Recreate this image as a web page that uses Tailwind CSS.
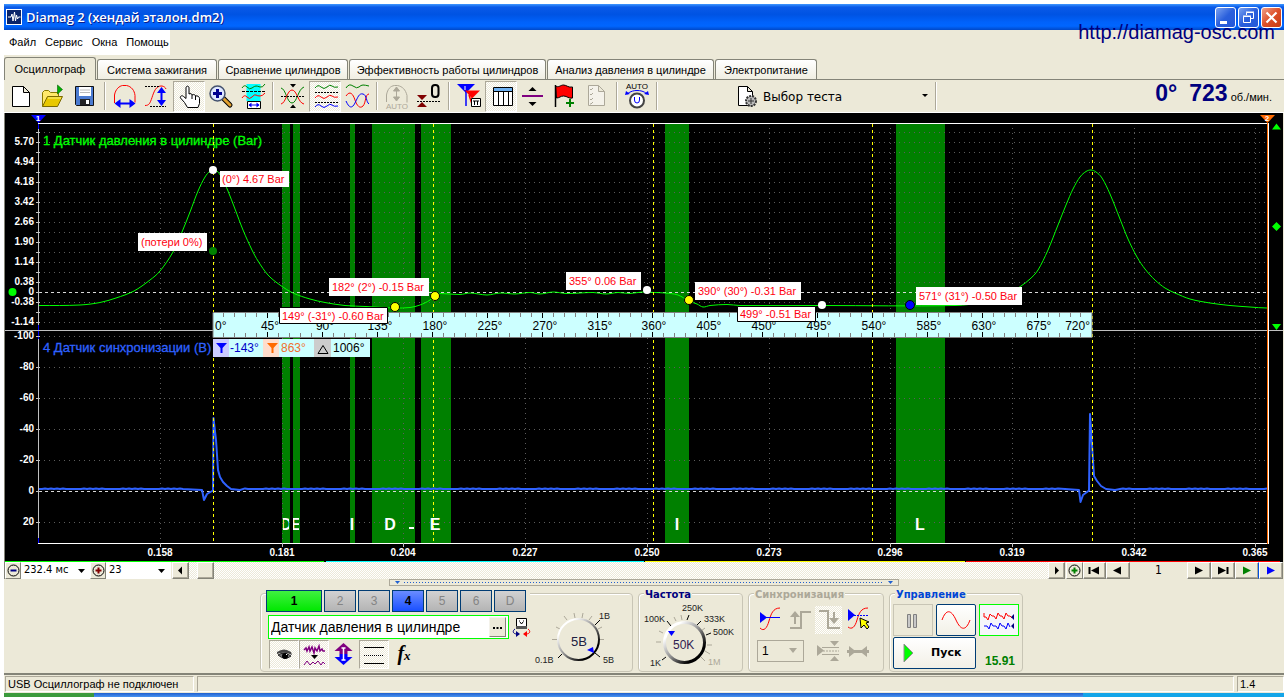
<!DOCTYPE html>
<html lang="ru">
<head>
<meta charset="utf-8">
<title>Diamag 2</title>
<script src="https://cdn.jsdelivr.net/npm/@tailwindcss/browser@4"></script>
</head>
<body class="bg-white pt-1 pl-1 pr-1 font-['Liberation_Sans',sans-serif] text-black">
<div class="flex flex-col bg-[#ece9d8]">

  <!-- Title bar -->
  <header class="flex h-[26px] items-center gap-1 bg-[linear-gradient(#3f97ff_0,#0a5ae8_12%,#0053e3_40%,#0062fb_70%,#0066ff_85%,#0048c8_100%)] pl-[2px] pr-[2px]">
    <svg class="h-4 w-4" viewBox="0 0 16 16"><rect width="16" height="16" fill="#fff"/><rect x="1" y="1" width="14" height="14" fill="#0a246a"/><path d="M2 8h3l1-3 1 7 1.500-9 1 9 1-6 1 4 1-2h2" fill="none" stroke="#fff"/></svg>
    <h1 class="flex-1 whitespace-nowrap font-['Open_Sans',sans-serif] text-[13px] leading-4 font-semibold text-white [text-shadow:1px_1px_#0a1e8c]">Diamag 2 (хендай эталон.dm2)</h1>
    <div class="flex gap-[2px]">
      <button aria-label="Свернуть" class="h-[21px] w-[21px] rounded-[3px] border border-white bg-[linear-gradient(135deg,#7ba2f0,#2a5fdc_50%,#2458d8)]"><svg viewBox="0 0 19 19"><path d="M4 14.500h7" stroke="#fff" stroke-width="3"/></svg></button>
      <button aria-label="Восстановить" class="h-[21px] w-[21px] rounded-[3px] border border-white bg-[linear-gradient(135deg,#7ba2f0,#2a5fdc_50%,#2458d8)]"><svg viewBox="0 0 19 19" fill="none" stroke="#fff"><path d="M7.500 7V4.500h7v6H12M7 4h8"/><path d="M4.500 8.500h7v6h-7zM4 8h8"/></svg></button>
      <button aria-label="Закрыть" class="h-[21px] w-[21px] rounded-[3px] border border-white bg-[linear-gradient(135deg,#f0a08a,#dd4f28_50%,#c83c12)]"><svg viewBox="0 0 19 19"><path d="M4.500 4.500l10 10m0-10l-10 10" stroke="#fff" stroke-width="2.200"/></svg></button>
    </div>
  </header>

  <!-- Menu -->
  <div class="relative flex h-[27px] items-start">
    <nav class="flex h-[25px] w-[166px] items-center gap-[9px] bg-white pl-[5px] text-[11px]">
      <button>Файл</button><button>Сервис</button><button>Окна</button><button>Помощь</button>
    </nav>
    <a href="#site" class="absolute -top-[10px] right-[9px] text-[20px] leading-6 text-[#00007e]">http://diamag-osc.com</a>
  </div>

  <!-- Tabs -->
  <div role="tablist" class="flex h-[23px] items-end gap-px border-b border-[#848478] leading-4 whitespace-nowrap">
    <button role="tab" aria-selected="true" class="-mb-px h-[23px] w-[92px] rounded-t-[3px] border border-b-0 border-[#848478] bg-[#ece9d8] text-[11px]">Осциллограф</button>
    <button role="tab" class="h-5 w-[120px] rounded-t-[3px] border border-b-0 border-[#848478] bg-[linear-gradient(#fff,#f0eee2)] text-[11px]">Система зажигания</button>
    <button role="tab" class="h-5 w-[130px] rounded-t-[3px] border border-b-0 border-[#848478] bg-[linear-gradient(#fff,#f0eee2)] text-[11px]">Сравнение цилиндров</button>
    <button role="tab" class="h-5 w-[197px] rounded-t-[3px] border border-b-0 border-[#848478] bg-[linear-gradient(#fff,#f0eee2)] text-[11px]">Эффективность работы цилиндров</button>
    <button role="tab" class="h-5 w-[167px] rounded-t-[3px] border border-b-0 border-[#848478] bg-[linear-gradient(#fff,#f0eee2)] text-[11px]">Анализ давления в цилиндре</button>
    <button role="tab" class="h-5 w-[102px] rounded-t-[3px] border border-b-0 border-[#848478] bg-[linear-gradient(#fff,#f0eee2)] text-[11px]">Электропитание</button>
  </div>

  <!-- Toolbar -->
  <div role="toolbar" class="flex h-[33px] items-center border-b border-white pl-px">
    <button aria-label="Новый" class="h-[31px] w-8"><svg viewBox="5 81 32 31"><path d="M12.500 86.500h11l6 6v14h-17zM23.500 86.500v6h6" fill="#fff" stroke="#000"/></svg></button>
    <button aria-label="Открыть" class="h-[31px] w-8"><svg viewBox="37 81 32 31"><path d="M42.500 106.500v-14l2-2h4l2 2h8v4" fill="#ffe96b" stroke="#8a7a00"/><path d="M42.500 106.500l5-10h15l-5 10z" fill="#e8c800" stroke="#7a6a00"/><path d="M57.500 85v9l5-4.500z" fill="#00b000" stroke="#006000" stroke-width=".6"/><path d="M48 98h13" stroke="#fff68a"/></svg></button>
    <button aria-label="Сохранить" class="h-[31px] w-8"><svg viewBox="69 81 32 31"><path d="M75.500 86.500h18v19h-17l-1-1z" fill="#4a7ad0" stroke="#111"/><path d="M79 87h12v9H79z" fill="#fff"/><path d="M80 90h10M80 92.500h10" stroke="#bbb"/><path d="M80 99h10v6H80z" fill="#222"/><path d="M86 100h3v4h-3z" fill="#fff"/></svg></button>
    <span class="flex h-7 w-2 justify-center"><i class="w-[2px] border-l border-[#aca899] bg-white"></i></span>
    <button aria-label="Растянуть по времени" class="h-[31px] w-8"><svg viewBox="109 81 32 31"><path d="M114.500 103v-8c1-6 5-9 8-9.500h4c5 1 8 5 8.500 10v7" fill="none" stroke="#f00"/><path d="M117 103.500h16" stroke="#00f" stroke-width="2"/><path d="M114.500 103.500l6-4.500v9zM135.500 103.500l-6-4.500v9z" fill="#00f"/></svg></button>
    <button aria-label="Растянуть по амплитуде" class="h-[31px] w-8"><svg viewBox="141 81 32 31" fill="none"><path d="M145 105.500c4 0 5-2 7-8s4-12 10-11.500c2 .5 3 1 4 3" stroke="#f00"/><path d="M145 86.500h15M150 106.500h16" stroke="#000" stroke-dasharray="2 1"/><path d="M161.500 90v14" stroke="#00f" stroke-width="2"/><path d="M161.500 87l4.500 6h-9zM161.500 106l4.500-6h-9z" fill="#00f"/></svg></button>
    <button aria-label="Рука" class="h-[31px] w-8 border border-[#aca899] border-r-white border-b-white bg-[repeating-conic-gradient(#fff_0_25%,#ece9d8_0_50%)] bg-[length:2px_2px]"><svg viewBox="174 82 30 29"><path d="M187.500 107.500l-3-5-4-4.500c-1-2 2-3 3-1.500l2.500 2V88c0-2.500 3-2.500 3 0v6c1.500-1 3 0 3 1 2-1 3.500 0 3.500 1 2-.5 4 .5 4 2.500v5l-1.500 4z" fill="#fff" stroke="#000" stroke-linejoin="round"/><path d="M192 95v4M195.500 96v4" stroke="#000"/></svg></button>
    <button aria-label="Увеличить" class="h-[31px] w-8"><svg viewBox="205 81 32 31"><path d="M224 99l6 6" stroke="#000" stroke-width="5" stroke-linecap="round"/><path d="M224 99l6 6" stroke="#e0a030" stroke-width="3" stroke-linecap="round"/><circle cx="217.500" cy="93.500" r="7.500" fill="#dfe8ff" stroke="#44526e" stroke-width="1.500"/><path d="M213 93.500h9M217.500 89v9" stroke="#000090" stroke-width="3"/></svg></button>
    <button aria-label="Участок" class="h-[31px] w-8"><svg viewBox="237 81 32 31" fill="none"><path d="M246.500 84h14v17h-14z" fill="#0ff"/><path d="M242 88q2.500-4 5-1t5 1 4-2 4 1 5-3" stroke="#008000"/><path d="M242 91.500h23" stroke="#000" stroke-dasharray="3 1"/><path d="M242 98q2.500-4 5-1t5 0 4-2 4 1 5-3" stroke="#f00"/><path d="M247.500 101.500h13v7h-13z" fill="#fff" stroke="#000"/><path d="M249 105h10" stroke="#00f"/><path d="M248.500 105l3-2.500v5zM259.500 105l-3-2.500v5z" fill="#00f"/></svg></button>
    <span class="flex h-7 w-2 justify-center"><i class="w-[2px] border-l border-[#aca899] bg-white"></i></span>
    <button aria-label="Наложить" class="h-[31px] w-8"><svg viewBox="277 81 32 31" fill="none"><path d="M281 88c5 1 6 15 11 15s6-14 12-16" stroke="#008000"/><path d="M281 104c5-1 6-14 11-14s6 13 12 14" stroke="#f00"/><path d="M281 96.500h24" stroke="#000" stroke-dasharray="2 1"/><path d="M290 84h6l-3 3.500zM290 108h6l-3-3.500z" fill="#000"/></svg></button>
    <button aria-label="Раздельно" class="h-[31px] w-8 border border-[#aca899] border-r-white border-b-white bg-[repeating-conic-gradient(#fff_0_25%,#ece9d8_0_50%)] bg-[length:2px_2px]"><svg viewBox="310 82 30 29" fill="none"><path d="M315 88q3-4 6-1t6 0 5-1 6 1" stroke="#008000"/><path d="M315 98q3-4 6-1t6 0 5-1 6 1" stroke="#f00"/><path d="M315 107q3-4 6-1t6 0 5-1 6 1" stroke="#00f"/><path d="M315 92.500h23M315 102.500h23" stroke="#000" stroke-dasharray="2 1"/></svg></button>
    <button aria-label="Совместно" class="h-[31px] w-8"><svg viewBox="341 81 32 31" fill="none"><path d="M346 88q3-5 7-2t6 1 4-2 6 1" stroke="#008000"/><path d="M346 96c4-6 7-2 9 4s5 9 8 6 2-12 6-12" stroke="#f00"/><path d="M346 101c3 7 6 8 9 2s4-10 8-9 3 8 6 10" stroke="#00f"/></svg></button>
    <span class="flex h-7 w-2 justify-center"><i class="w-[2px] border-l border-[#aca899] bg-white"></i></span>
    <button aria-label="Авто" class="h-[31px] w-8"><svg viewBox="381 81 32 31" fill="none" stroke="#aca899"><path d="M386.500 102v-7c1-6 4-9 8-9.500h3c5 1 8 4 9.500 10v7"/><path d="M396.500 89v10" /><path d="M396.500 87l3 4h-6zM396.500 101l3-4h-6z" fill="#aca899"/><text x="386" y="109" font-size="8" font-family="Liberation Sans" fill="#aca899" stroke="none">AUTO</text></svg></button>
    <button aria-label="Обнулить" class="h-[31px] w-8"><svg viewBox="413 81 32 31"><path d="M417 95h10l-5 5zM417 107h10l-5-5z" fill="#800000"/><path d="M417 101.500h23" stroke="#000" stroke-dasharray="2 1"/><rect x="432" y="85" width="6.500" height="12" rx="3" fill="none" stroke="#000" stroke-width="2"/></svg></button>
    <span class="flex h-7 w-2 justify-center"><i class="w-[2px] border-l border-[#aca899] bg-white"></i></span>
    <button aria-label="Маркеры" class="h-[31px] w-8"><svg viewBox="453 81 32 31"><path d="M457 84h18l-9 9z" fill="#00f"/><path d="M466 92v14" stroke="#00f" stroke-width="1.500"/><path d="M465 90.500h15l-8 8z" fill="#f00"/><path d="M469 95l3 9" stroke="#f00" stroke-width="1.500"/><path d="M465 86v4" stroke="#fff"/><path d="M471.500 98.500h9v8h-9z" fill="#fff" stroke="#000"/><path d="M473 101h6M474.500 101v4M477.500 101v4" stroke="#000"/></svg></button>
    <button aria-label="Таблица" class="h-[31px] w-8 border border-[#aca899] border-r-white border-b-white bg-[repeating-conic-gradient(#fff_0_25%,#ece9d8_0_50%)] bg-[length:2px_2px]"><svg viewBox="486 82 30 29"><path d="M493.500 87.500h19v18h-19z" fill="#fff" stroke="#000"/><path d="M494 88h18v3h-18z" fill="#6db0f0"/><path d="M493 91.500h20M498.500 91v14M503.500 91v14M508.500 91v14" stroke="#000"/></svg></button>
    <button aria-label="Разделитель" class="h-[31px] w-8"><svg viewBox="517 81 32 31"><path d="M522 96h21" stroke="#800080" stroke-width="2"/><path d="M532.500 87l4 4h-8zM532.500 106l4-4h-8z"/></svg></button>
    <button aria-label="Добавить метку" class="h-[31px] w-8"><svg viewBox="549 81 32 31"><path d="M555.500 86c3 2 5-1 8-1s5 3 9 2v11c-4 1-5-2-9-2-3 0-4 2-7 2z" fill="#f00" stroke="#000"/><path d="M555.500 85v22" stroke="#000" stroke-width="1.500"/><path d="M566 103h8M570 99v8" stroke="#008000" stroke-width="2"/></svg></button>
    <button aria-label="Отчёт" class="h-[31px] w-8"><svg viewBox="581 81 32 31" fill="none" stroke="#aca899"><path d="M588.500 85.500h10l6 6v14h-16zM598.500 85.500v6h6" fill="#f4f2ea"/><path d="M590 89l1 1 2-2M590 94l1 1 2-2M590 99l1 1 2-2M590 104l1 0 2-2"/></svg></button>
    <span class="flex h-7 w-2 justify-center"><i class="w-[2px] border-l border-[#aca899] bg-white"></i></span>
    <button aria-label="Авто U" class="h-[31px] w-8"><svg viewBox="621 81 32 31" fill="none"><text x="626" y="89" font-size="8" font-family="Liberation Sans" fill="#000">AUTO</text><circle cx="637" cy="100.500" r="7" fill="#fff" stroke="#444" stroke-width="2"/><path d="M634.500 97v3q0 3 2.500 3t2.500-3v-3M627 94c4-3 7-3.500 10-3.500s7 .5 10 3.500" stroke="#00f"/><path d="M625 95l1-4 4 3zM649 95l-1-4-4 3z" fill="#00f"/></svg></button>
    <span class="flex h-7 w-2 justify-center"><i class="w-[2px] border-l border-[#aca899] bg-white"></i></span>
    <button class="ml-[73px] flex h-[31px] w-[198px] items-center text-left"><svg class="mr-[5px] h-[31px] w-6" viewBox="734 81 24 31"><path d="M738.500 86.500h9l5 5v14h-14zM747.500 86.500v5h5" fill="#fff" stroke="#000"/><circle cx="751" cy="101" r="5" fill="#bbb" stroke="#333" stroke-width="2" stroke-dasharray="2 1"/><path d="M748 101h6M751 98v6" stroke="#333"/></svg><span class="flex-1 pt-px font-['DejaVu_Sans',sans-serif] text-[12px]">Выбор теста</span><svg class="mr-[3px] h-1 w-2" viewBox="0 0 8 4"><path d="M1 0h6l-3 3z"/></svg></button>
    <span class="flex h-7 w-2 justify-center"><i class="w-[2px] border-l border-[#aca899] bg-white"></i></span>
    <div class="ml-auto flex items-baseline pr-3 pb-[2px] leading-7 text-[#00007e]"><b class="mr-3 text-[23px]">0°</b><b class="mr-[3px] text-[23px]">723</b><span class="text-[11px] text-black">об./мин.</span></div>
  </div>

  <!-- Oscillogram -->
  <main class="border-l border-[#848478] pr-[1px]">
    <svg id="plot" class="block w-full bg-black" viewBox="5 113 1278 449" font-family="Liberation Sans, sans-serif">
      <g id="bands" fill="#008000">
        <path d="M282 124h8v419h-8zM293 124h7v419h-7zM350 124h5v419h-5zM372 124h43v419h-43zM421 124h30v419h-30zM665 124h24v419h-24zM896 124h49v419h-49z"/>
      </g>
      <g id="grid" stroke="#5c5c5c" fill="none" shape-rendering="crispEdges"></g>
      <g stroke="#d8d8d8" fill="none" stroke-dasharray="3 3" shape-rendering="crispEdges"><path d="M39 292.500h1228M39 491.500h1228"/></g>
      <g fill="none" shape-rendering="crispEdges">
        <path d="M38.500 124v420" stroke="#c0c0c0"/><path d="M38.500 122v7M38.500 325v14M38.500 538v6" stroke="#00f"/>
        <path d="M38 123.500h1230M38 543.500h1231" stroke="#fff"/>
        <path d="M5 330.500h1278" stroke="#c0c0c0"/>
        <path d="M1268.500 123v421" stroke="#fff"/><path d="M1267.500 123v421" stroke="#ff6a00"/>
      </g>
      <g id="axis" fill="#fff" font-size="10" font-weight="bold"></g>
      <text x="43" y="145" font-size="13" fill="#0f0" stroke="#0f0" stroke-width=".3">1 Датчик давления в цилиндре (Bar)</text>
      <text x="43" y="352" font-size="13" fill="#2f62ff" stroke="#2f62ff" stroke-width=".3">4 Датчик синхронизации (В)</text>
      <g id="traces" fill="none"></g>
      <g stroke="#ff0" stroke-dasharray="3 3" shape-rendering="crispEdges"><path d="M213.500 124v419M433.500 124v419M653.500 124v419M872.500 124v419M1092.500 124v419"/></g>
      <g fill="#fff" font-size="16" font-weight="bold" text-anchor="middle">
        <svg x="283" y="515" width="6" height="18" viewBox="283 515 6 18"><text x="286" y="530">D</text></svg>
        <svg x="293" y="515" width="6" height="18" viewBox="293 515 6 18"><text x="296" y="530">E</text></svg>
        <text x="352" y="530">I</text><text x="390" y="530">D</text><path d="M409 527h5v2h-5z"/><text x="435" y="530">E</text><text x="677" y="530">I</text><text x="920" y="530">L</text>
      </g>
      <path d="M213 312.500h879v25h-879z" fill="#ccffff"/>
      <path d="M213 312.500h879v25h-879z" fill="none" stroke="#808080"/>
      <g id="ruler" font-size="12" shape-rendering="crispEdges"></g>
      <g font-size="12">
        <path d="M213 339h157v18H213z" fill="#ccffff"/><path d="M213 339h16v18h-16z" fill="#ccccff"/><path d="M263 339h16v18h-16z" fill="#ffddcc"/><path d="M314 339h17v18h-17z" fill="#ccc"/>
        <path d="M216 343h11l-4.500 5v5h-2v-5z" fill="#00f"/><path d="M267 343h11l-4.500 5v5h-2v-5z" fill="#ff6a00"/><path d="M318 353.500h10l-5-8z" fill="none" stroke="#000"/>
        <text x="230" y="352" fill="#0000c8">-143°</text><text x="281" y="352" fill="#f07030">863°</text><text x="333" y="352" fill="#000">1006°</text>
      </g>
      <g fill="#fff"><path d="M220 171h69v16h-69zM138 233h69v18h-69zM329 278h100v18H329zM566 272h75v18h-75zM695 282h106v18H695zM916 287h106v18H916z"/>
        <path d="M279.500 307.500h108v16h-108zM737.500 306.500h78v15h-78z" stroke="#000"/></g>
      <g fill="#ff0010" font-size="11">
        <text x="222" y="183">(0°) 4.67 Bar</text><text x="141" y="246">(потери 0%)</text><text x="332" y="291">182° (2°) -0.15 Bar</text><text x="282" y="320">149° (-31°) -0.60 Bar</text><text x="569" y="285">355° 0.06 Bar</text><text x="698" y="295">390° (30°) -0.31 Bar</text><text x="740" y="318">499° -0.51 Bar</text><text x="919" y="300">571° (31°) -0.50 Bar</text>
      </g>
      <g stroke="#000"><circle cx="395" cy="307" r="4.500" fill="#ff0"/><circle cx="435" cy="296" r="4.500" fill="#ff0"/><circle cx="689" cy="300" r="4.500" fill="#ff0"/><circle cx="910" cy="305" r="4.500" fill="#00f"/></g>
      <circle cx="213" cy="170" r="4" fill="#fff"/><circle cx="647" cy="290" r="4" fill="#fff"/><circle cx="822" cy="305" r="4" fill="#fff"/><circle cx="213" cy="251" r="4" fill="#008000"/><circle cx="12.500" cy="292" r="4" fill="#0f0"/>
      <path d="M1276.500 123.500l4.500 6h-9zM1276.500 330l4.500-6h-9zM1276.500 222l4.500 4.500-4.500 4.500-4.500-4.500z" fill="#0f0"/>
      <path d="M31 115h15l-7.500 8z" fill="#00f"/><path d="M1260 115h15l-7.500 8z" fill="#ff6a00"/>
      <g fill="#fff" font-size="8" font-weight="bold" text-anchor="middle"><text x="38" y="121">1</text><text x="1267" y="121">2</text></g>
      <g shape-rendering="crispEdges"><path d="M5 561.500h319" stroke="#0f0"/><path d="M326 561.500h318" stroke="#0ff"/><path d="M645 561.500h320" stroke="#ff0"/><path d="M966 561.500h314" stroke="#f00"/></g>
    </svg>
  </main>

  <!-- Time scroll row -->
  <div class="flex h-[17px] items-stretch border-l border-[#848478] font-['DejaVu_Sans_Condensed','DejaVu_Sans',sans-serif] text-[11px]">
    <button aria-label="Уменьшить масштаб" class="w-4 border border-white border-r-[#848478] border-b-[#848478]"><svg viewBox="0 0 14 15"><circle cx="7.500" cy="7.500" r="5.500" fill="none" stroke="#000"/><path d="M4.500 7.500h6" stroke="#000080" stroke-width="2"/></svg></button>
    <div class="relative w-[69px]"><select aria-label="Развёртка" class="h-full w-full appearance-none bg-white pl-[3px]"><option>232.4 мс</option></select><svg class="pointer-events-none absolute top-[7px] right-[5px] h-1 w-[7px]" viewBox="0 0 7 4"><path d="M0 0h7l-3.500 4z"/></svg></div>
    <button aria-label="Увеличить масштаб" class="w-4 border border-white border-r-[#848478] border-b-[#848478]"><svg viewBox="0 0 14 15"><circle cx="7.500" cy="7.500" r="5.500" fill="none" stroke="#000"/><path d="M4.500 7.500h6M7.500 4.500v6" stroke="#800000" stroke-width="2"/></svg></button>
    <div class="relative mr-px w-[65px]"><select aria-label="Кадр" class="h-full w-full appearance-none bg-white pl-[3px]"><option>23</option></select><svg class="pointer-events-none absolute top-[7px] right-[6px] h-1 w-[7px]" viewBox="0 0 7 4"><path d="M0 0h7l-3.500 4z"/></svg></div>
    <button aria-label="Влево" class="w-[17px] border border-white border-r-[#848478] border-b-[#848478] shadow-[inset_-1px_-1px_#aca899]"><svg viewBox="0 0 15 15"><path d="M9 3.500v8L5 7.500z"/></svg></button>
    <div class="flex-1 bg-[repeating-conic-gradient(#fff_0_25%,#ece9d8_0_50%)] bg-[length:2px_2px] pl-2"><div class="h-full w-[17px] border border-white border-r-[#848478] border-b-[#848478] bg-[#ece9d8] shadow-[inset_-1px_-1px_#aca899]"></div></div>
    <button aria-label="Вправо" class="mr-px w-[17px] border border-white border-r-[#848478] border-b-[#848478] shadow-[inset_-1px_-1px_#aca899]"><svg viewBox="0 0 15 15"><path d="M6 3.500v8l4-4z"/></svg></button>
    <button aria-label="Добавить" class="w-[17px] border border-white border-r-[#848478] border-b-[#848478]"><svg viewBox="0 0 15 15"><circle cx="7.500" cy="7.500" r="5.500" fill="none" stroke="#000"/><path d="M4.500 7.500h6M7.500 4.500v6" stroke="#008000" stroke-width="2"/></svg></button>
    <button aria-label="В начало" class="w-[23px] border border-white border-r-[#848478] border-b-[#848478] shadow-[inset_-1px_-1px_#aca899]"><svg viewBox="0 0 21 15"><path d="M5.500 4v7" stroke="#000" stroke-width="2"/><path d="M15 3.500v8l-8-4z"/></svg></button>
    <button aria-label="Назад" class="w-6 border border-white border-r-[#848478] border-b-[#848478] shadow-[inset_-1px_-1px_#aca899]"><svg viewBox="0 0 22 15"><path d="M14 3.500v8l-8-4z"/></svg></button>
    <output class="w-[57px] text-center text-[12px] leading-[17px]">1</output>
    <button aria-label="Вперёд" class="w-6 border border-white border-r-[#848478] border-b-[#848478] shadow-[inset_-1px_-1px_#aca899]"><svg viewBox="0 0 22 15"><path d="M7 3.500v8l8-4z"/></svg></button>
    <button aria-label="В конец" class="w-6 border border-white border-r-[#848478] border-b-[#848478] shadow-[inset_-1px_-1px_#aca899]"><svg viewBox="0 0 22 15"><path d="M6 3.500v8l8-4z"/><path d="M15.500 4v7" stroke="#000" stroke-width="2"/></svg></button>
    <button aria-label="Воспроизвести" class="w-6 border border-white border-r-[#0050e0] border-b-[#848478] shadow-[inset_-1px_-1px_#aca899]"><svg viewBox="0 0 22 15"><path d="M7 3.500v8l8-4z" fill="#008000"/></svg></button>
    <button aria-label="Воспроизвести всё" class="mr-px w-6 border border-white border-r-[#848478] border-b-[#848478] shadow-[inset_-1px_-1px_#aca899]"><svg viewBox="0 0 22 15"><path d="M7 3.500v8l8-4z" fill="#00f"/></svg></button>
  </div>

  <!-- Splitter -->
  <div class="flex h-[7px] justify-center"><div class="flex w-[510px] items-center gap-1 border border-[#aca899] px-[5px]"><svg class="h-[3px] w-[5px]" viewBox="0 0 5 3"><path d="M0 0h5L2.500 3z" fill="#2060d0"/></svg><i class="h-px flex-1 bg-[repeating-linear-gradient(90deg,#2060d0_0_1px,transparent_1px_3px)]"></i><svg class="h-[3px] w-[5px]" viewBox="0 0 5 3"><path d="M0 0h5L2.500 3z" fill="#2060d0"/></svg></div></div>

  <!-- Control panel -->
  <div class="flex h-[88px] items-end justify-center gap-[5px] border-b border-[#848478] pr-[5px] pb-px">
    <section class="flex h-[79px] w-[373px] rounded-[4px] border border-[#c8c5b5] shadow-[inset_1px_1px_#fff]">
      <div class="-mt-1 ml-[5px] flex w-[264px] shrink-0 flex-col">
        <div class="flex h-[23px] gap-[2px] bg-[#ece9d8] text-[12px] text-[#848484]">
          <button class="h-[22px] w-[56px] border border-[#003c74] bg-[linear-gradient(#40f040,#00e800)] font-bold text-black">1</button>
          <button class="h-[22px] w-8 border border-[#003c74] bg-[linear-gradient(#d2d2d2,#b4b4b4)]">2</button>
          <button class="h-[22px] w-8 border border-[#003c74] bg-[linear-gradient(#d2d2d2,#b4b4b4)]">3</button>
          <button class="h-[22px] w-8 border border-[#003c74] bg-[linear-gradient(#6a8cff,#1a50ff)] font-bold text-black">4</button>
          <button class="h-[22px] w-8 border border-[#003c74] bg-[linear-gradient(#d2d2d2,#b4b4b4)]">5</button>
          <button class="h-[22px] w-8 border border-[#003c74] bg-[linear-gradient(#d2d2d2,#b4b4b4)]">6</button>
          <button class="h-[22px] w-8 border border-[#003c74] bg-[linear-gradient(#d2d2d2,#b4b4b4)]">D</button>
        </div>
        <div class="mt-[2px] flex items-center gap-[3px] pl-[2px]">
          <div class="flex h-6 w-[241px] shrink-0 items-center border border-[#0f0] bg-white px-[2px]"><input aria-label="Название канала" value="Датчик давления в цилиндре" class="min-w-0 flex-1 bg-white text-[14px] outline-none"><button aria-label="Выбрать датчик" class="h-5 w-[17px] border border-[#f4f2ea] border-r-[#848478] border-b-[#848478] bg-[#ece9d8]"><svg viewBox="0 0 15 18"><path d="M3 9h2v2H3zM6.500 9h2v2h-2zM10 9h2v2h-2z"/></svg></button></div>
          <button aria-label="Настройки датчика" class="h-5 w-5 shrink-0"><svg class="h-5 w-5" viewBox="512 616 20 20" fill="none"><path d="M516.500 617.500h10v8h-10z" fill="#fff" stroke="#000"/><path d="M519 620h1M523 620h1M520 621l1.500 2 1.500-2" stroke="#000"/><path d="M516 625h11v3h-11z" fill="#555"/><path d="M515 628c-3 2-2 5 2 5" stroke="#000080"/><path d="M516 630l4 3-4 3z" fill="#000080"/><path d="M528 628c3 2 2 5-2 5" stroke="#f00"/><path d="M527 630l-4 3 4 3z" fill="#f00"/></svg></button>
        </div>
        <div class="mt-px flex items-center pl-[3px]">
          <button aria-label="Показать" class="h-[29px] w-[30px] border border-[#aca899] border-r-white border-b-white bg-[repeating-conic-gradient(#fff_0_25%,#ece9d8_0_50%)] bg-[length:2px_2px]"><svg viewBox="0 0 28 27"><path d="M7 11q7-5 14 0l1 3q-7-4-15-1z" fill="#444"/><path d="M8 14q6-4 13 1-6 5-13-1z" fill="#777" stroke="#222"/><circle cx="15" cy="15" r="3"/><path d="M16 13.500h1" stroke="#fff"/></svg></button>
          <button aria-label="Сглаживание" class="h-[29px] w-[30px] border border-[#aca899] border-r-white border-b-white bg-[repeating-conic-gradient(#fff_0_25%,#ece9d8_0_50%)] bg-[length:2px_2px]"><svg viewBox="0 0 28 27" fill="none" stroke="#800080"><path d="M4 9l2-2 1 3 2-4 1 4 2-4 2 6 1-5 2 3 2-5 1 5 2-2 1 2h2" stroke-width="1.500"/><path d="M11 14h7l-3.500 4z" fill="#000" stroke="none"/><path d="M4 24l3-4 3 4 3-3 2 2 3-3 3 4 2-3 2 2"/></svg></button>
          <button aria-label="Инверсия" class="h-[29px] w-[30px]"><svg viewBox="330 640 30 29"><path d="M344.500 643l9 8h-5v3h-8v-3h-5z" fill="#800080"/><path d="M344.500 665l9-8h-5v-3h-8v3h-5z" fill="#00f"/><path d="M344.500 648v12M342.500 648h4M342.500 660h4" stroke="#fff" stroke-width="1.500"/></svg></button>
          <button aria-label="Линии" class="h-[29px] w-[30px] border border-[#aca899] border-r-white border-b-white bg-[repeating-conic-gradient(#fff_0_25%,#ece9d8_0_50%)] bg-[length:2px_2px]"><svg viewBox="0 0 28 27" stroke="#000"><path d="M4 6.500h20M4 22.500h20"/><path d="M4 14.500h20" stroke-dasharray="1 1"/></svg></button>
          <button aria-label="Функция" class="h-[29px] w-[30px] font-['Liberation_Serif',serif] text-[20px] leading-6 font-bold italic">f<span class="text-[13px]">x</span></button>
        </div>
      </div>
      <svg class="h-[77px] w-[100px]" viewBox="532 595 100 77" font-family="Liberation Sans">
        <defs><linearGradient id="knob" x1="0" y1="0" x2="1" y2="1"><stop offset=".2" stop-color="#fff"/><stop offset=".5" stop-color="#909090"/><stop offset=".8" stop-color="#000"/></linearGradient></defs>
        <g stroke="#aca899"><path d="M554 640.500h5M558 628l4 2M566 617l3 4M576 614l1 5M584 619l1-5M591 621l3-4M602 640.500h4M600 630l4-2"/></g>
        <path d="M560 659l4-4M597 626l5-5M597 654l5 4" stroke="#000"/>
        <circle cx="580.500" cy="640.500" r="20.500" fill="none" stroke="url(#knob)" stroke-width="2"/>
        <path d="M595 648l1 6-7-3z" fill="#00f"/>
        <text x="573" y="647" font-size="13" fill="#202040">5В</text>
        <g font-size="9" fill="#222"><text x="537" y="664">0.1В</text><text x="601" y="620">1В</text><text x="605" y="664">5В</text></g>
      </svg>
    </section>
    <section class="relative h-[79px] w-[105px] rounded-[4px] border border-[#c8c5b5] shadow-[inset_1px_1px_#fff]">
      <h2 class="absolute -top-[5px] left-[5px] bg-[#ece9d8] px-px font-['DejaVu_Sans',sans-serif] text-[10px] leading-3 font-bold text-[#00007e]">Частота</h2>
      <svg class="h-[77px] w-full" viewBox="639 595 103 77" font-family="Liberation Sans">
        <path d="M662 661l4-3M667 622l4 5M689 616l-2 5M701 622l-4 4M711 634l-5 2" stroke="#000"/>
        <g stroke="#aca899"><path d="M656 643h5M659 632l4 2M674 618l2 4M681 616l1 5M705 629l-4 3M712 646h-5M710 655l-5-3M705 662l-4-4"/></g>
        <circle cx="684.500" cy="643.500" r="20" fill="none" stroke="url(#knob)" stroke-width="3"/>
        <path d="M668 632h7l-3.500 5z" fill="#00f"/>
        <text x="673" y="650" font-size="12" fill="#302050">50K</text>
        <g font-size="9" fill="#222"><text x="682" y="612">250K</text><text x="644" y="623">100K</text><text x="704" y="623">333K</text><text x="713" y="636">500K</text><text x="650" y="667">1K</text><text x="708" y="666" fill="#aca899">1M</text></g>
      </svg>
    </section>
    <section class="relative h-[79px] w-[136px] rounded-[4px] border border-[#c8c5b5] pt-3 pl-[6px] shadow-[inset_1px_1px_#fff]">
      <h2 class="absolute -top-[5px] left-[5px] bg-[#ece9d8] px-px font-['DejaVu_Sans',sans-serif] text-[10px] leading-3 font-bold text-[#aca899]">Синхронизация</h2>
      <div class="flex">
        <button aria-label="Уровень" class="h-7 w-[30px]"><svg viewBox="755 606 30 28" fill="none"><path d="M760 628c4 4 7 0 9-7s4-13 11-13" stroke="#f00"/><path d="M760 612v11l7-5.500z" fill="#00f"/><path d="M766 617.500h14" stroke="#00f"/></svg></button>
        <button aria-label="Фронт" class="h-7 w-[30px]"><svg viewBox="785 606 30 28" fill="none" stroke="#aca899" stroke-width="2"><path d="M790 628h11v-16h10M795 624v-8"/><path d="M795 611l5 6h-10z" fill="#aca899" stroke="none"/></svg></button>
        <button aria-label="Спад" class="h-7 w-[27px] bg-[repeating-conic-gradient(#fff_0_25%,#ece9d8_0_50%)] bg-[length:2px_2px]"><svg viewBox="816 606 27 28" fill="none" stroke="#aca899" stroke-width="2"><path d="M820 611h9v17h12M835 612v6"/><path d="M835 624l5-6h-10z" fill="#aca899" stroke="none"/></svg></button>
        <button aria-label="Ручная установка" class="ml-[3px] h-7 w-[30px]"><svg viewBox="847 606 30 28" fill="none"><path d="M850 627c4 3 7 0 9-7s4-12 11-12" stroke="#f00"/><path d="M850 609v12l7-6z" fill="#00f"/><path d="M856 615.500h14" stroke="#00f" stroke-dasharray="2 1"/><path d="M862 618l9 4-3 1 3 4-2 2-3-4-3 3z" fill="#ff0" stroke="#000"/></svg></button>
      </div>
      <div class="mt-[6px] flex items-center">
        <div class="relative ml-[2px]"><select disabled aria-label="Канал синхронизации" class="block h-[22px] w-[47px] appearance-none border border-[#aca899] bg-[#ece9d8] pl-1 text-[12px] text-black opacity-100"><option>1</option></select><svg class="absolute top-2 right-[7px] h-[5px] w-2" viewBox="0 0 8 5"><path d="M0 0h8L4 5z" fill="#aca899"/></svg></div>
        <svg class="ml-3 h-[22px] w-6" viewBox="815 640 24 22"><path d="M816 645v11l7-5.500zM829 641h9l-4.500 5zM829 661h9l-4.500-5z" fill="#aca899"/><path d="M821 647.500h17M821 654.500h17" stroke="#aca899"/><path d="M822 651h16" stroke="#aca899" stroke-dasharray="2 1"/></svg>
        <svg class="ml-[6px] h-[22px] w-6" viewBox="845 640 24 22"><path d="M848 646l7 5.500-7 5.500zM866 646l-7 5.500 7 5.500z" fill="#aca899"/><path d="M846 651.500h22" stroke="#aca899" stroke-width="3"/></svg>
      </div>
    </section>
    <section class="relative h-[79px] w-[134px] rounded-[4px] border border-[#c8c5b5] pt-[10px] pl-[3px] shadow-[inset_1px_1px_#fff]">
      <h2 class="absolute -top-[5px] left-[5px] bg-[#ece9d8] px-px font-['DejaVu_Sans',sans-serif] text-[10px] leading-3 font-bold text-[#0046d5]">Управление</h2>
      <div class="flex gap-[3px]">
        <button aria-label="Пауза" class="h-8 w-10 border border-[#c8c5b5]"><svg viewBox="0 0 38 30"><path d="M13.500 9.500h3v13h-3zM19.500 9.500h3v13h-3z" fill="#c8c8c8" stroke="#808080"/></svg></button>
        <button aria-label="Синус" class="h-8 w-10 rounded-[2px] border border-[#003c74] bg-[linear-gradient(#fff,#f2f0e6)]"><svg viewBox="0 0 38 30" fill="none"><path d="M5 15C9 4 14 4 19 15s10 11 14 0" stroke="#f00"/></svg></button>
        <button aria-label="Поток" class="h-8 w-10 border border-[#0f0] bg-[#f6f6fa]"><svg viewBox="0 0 38 30" fill="none"><path d="M4 8v4h2l2 3 2-6 2 2 2 0 2 3 2-6 2 3h2l2 3 2-6 2 3 2 0 2 2" stroke="#f00"/><path d="M4 21h3l2 3 2-6 2 3 3 0 2 3 2-6 2 3h2l2 3 2-6 2 4" stroke="#00f"/><path d="M34 9v6l-3-3zM34 18v6l-3-3z" fill="#000080"/></svg></button>
      </div>
      <div class="mt-px flex items-end gap-[9px]">
        <button class="flex h-8 w-[83px] items-center rounded-[2px] border border-[#003c74] bg-[linear-gradient(#fff,#f2f0e6)] pl-[9px] font-['DejaVu_Sans',sans-serif] text-[11px] font-bold"><svg class="mr-4 h-5 w-3" viewBox="0 0 12 20"><path d="M1 1v18l9-9z" fill="#0f0" stroke="#909090"/></svg>Пуск</button>
        <output class="text-[12px] leading-4 font-bold text-[#008000]">15.91</output>
      </div>
    </section>
  </div>

  <!-- Status bar -->
  <footer class="flex h-[19px] gap-[3px] border-t border-[#848478] pt-px pb-px pl-px text-[11px]">
    <span class="w-[189px] border border-[#aca899] border-r-white border-b-white pl-[2px] leading-[15px] whitespace-nowrap">USB Осциллограф не подключен</span>
    <span class="flex-1 border border-[#aca899] border-r-white border-b-white"></span>
    <span class="w-[47px] border border-[#aca899] border-r-white border-b-white pl-[2px] leading-[15px]">1.4</span>
  </footer>
  <div class="flex h-1 bg-[linear-gradient(#1f5fcf,#4a94f0)]"><i class="w-[90px] bg-[#3c9a3c]"></i><i class="flex-1"></i><i class="w-[201px] bg-[#14a5e8]"></i></div>
</div>

<script>
const ns = 'http://www.w3.org/2000/svg';
function add(parent, name, attrs, text) {
  const e = document.createElementNS(ns, name);
  for (const k in attrs) e.setAttribute(k, attrs[k]);
  if (text) e.textContent = text;
  document.getElementById(parent).appendChild(e);
}
// Dotted grid and axis ticks
const times = ['0.158','0.181','0.204','0.227','0.250','0.273','0.296','0.319','0.342','0.365'];
for (let y = 132; y <= 322; y += 10) {
  if (y !== 292) add('grid', 'path', {d: `M39 ${y + .5}h1228`, 'stroke-dasharray': '1 4'});
  add('axis', 'path', {d: `M36 ${y + .5}h4`, stroke: '#c0c0c0'});
}
for (let y = 336; y <= 522; y += 31) {
  if (y !== 491) add('grid', 'path', {d: `M39 ${y + .5}h1228`, 'stroke-dasharray': '1 4'});
  add('axis', 'path', {d: `M36 ${y + .5}h4`, stroke: '#c0c0c0'});
}
times.forEach((t, i) => {
  const x = Math.round(160 + i * 121.7);
  add('grid', 'path', {d: `M${x + .5} 128v415`, 'stroke-dasharray': '1 4'});
  add('axis', 'path', {d: `M${x + .5} 543v4`, stroke: '#c0c0c0'});
  add('axis', 'text', {x: x, y: 556, 'text-anchor': 'middle'}, t);
});
['5.70','4.94','4.18','3.42','2.66','1.90','1.14','0.38'].forEach((t, i) =>
  add('axis', 'text', {x: 34, y: 145 + i * 20, 'text-anchor': 'end'}, t));
[['0',295],['-0.38',305],['-1.14',325],['-100',339],['-80',370],['-60',401],['-40',432],['-20',463],['0',494],['20',525]].forEach(([t, y]) =>
  add('axis', 'text', {x: 34, y: y, 'text-anchor': 'end'}, t));
// Crank angle ruler
for (let a = 9; a < 720; a += 9) {
  const x = Math.floor(213 + a * 1.2208) + .5, big = a % 45 === 0, n = big ? 5 : 4;
  add('ruler', 'path', {d: `M${x} 313v${n}M${x} 337v-${n}`, stroke: big ? '#000' : '#808080'});
}
for (let a = 0; a <= 720; a += 45) {
  const x = a === 0 ? 215 : a === 720 ? 1090 : Math.round(215 + a * 1.2208);
  add('ruler', 'text', {x: x, y: 330, 'text-anchor': a === 0 ? 'start' : a === 720 ? 'end' : 'middle'}, a + '°');
}
// Smooth pressure trace through sample points
const p = [[39,305.500],[80,305],[100,302.500],[116,298],[134,291],[150,280],[160,271],[173,252],[182,232],[190,212],[198,191],[205,177],[210,171],[213,170],[217,171],[222,178],[228,191],[235,209],[243,230],[252,250],[258,261],[268,275],[280,285],[293,293],[310,299],[325,302.500],[345,305.500],[366,306.500],[395,308],[410,307.500],[420,305],[430,300],[436,294],[441,293.500],[460,294.500],[470,293],[487,295],[500,293],[515,294],[530,292.500],[540,294],[553,292],[566,293.500],[580,293],[593,292.500],[606,294],[618,292.500],[630,293.500],[642,292],[654,292.500],[665,293],[678,295],[689,301],[697,304],[703,307],[710,305.500],[727,304.500],[740,305.500],[822,305.500],[955,305.500],[985,302],[1005,296],[1021,286],[1030,279],[1038,270],[1048,250],[1058,225],[1066,205],[1073,189],[1080,177],[1086,171.500],[1091,170],[1096,172],[1102,178],[1110,194],[1120,219],[1128,239],[1137,257],[1145,269],[1155,280],[1165,288],[1175,293],[1190,299],[1210,303],[1230,305.500],[1250,307],[1267,308]];
let d = `M${p[0]}`;
for (let i = 0; i < p.length - 1; i++) {
  const a = p[i - 1] || p[i], b = p[i], c = p[i + 1], e = p[i + 2] || c;
  const s = (c[0] - b[0]) / 3;
  const m1 = b === a ? 0 : (c[1] - a[1]) / (c[0] - a[0]), m2 = e === c ? 0 : (e[1] - b[1]) / (e[0] - b[0]);
  d += `C${b[0] + s} ${b[1] + m1 * s} ${c[0] - s} ${c[1] - m2 * s} ${c}`;
}
add('traces', 'path', {d: d, stroke: '#00ff00', 'stroke-width': 1});
// Sync sensor trace: noisy baseline with two pulses
function flat(x0, x1) {
  let s = '';
  for (let x = x0; x <= x1; x += 3) s += `L${x} ${489 + ((x * 7919) % 13 > 8 ? -.6 : 0)}`;
  return s;
}
add('traces', 'path', {stroke: '#2f62ff', 'stroke-width': 2, 'stroke-linejoin': 'round', d:
  'M39 489' + flat(42, 185) + 'L202 490L204 500L207 494L213 490.500L213.500 418L216 440L218 470L220 477L223 482L227 486L231 489L240 490'
  + flat(245, 1060) + 'L1079 490L1080.500 502L1083 495L1089 490.500L1090 414L1092 445L1094 476L1097 481L1101 486L1106 489L1115 490' + flat(1120, 1267)});
</script>
</body>
</html>
